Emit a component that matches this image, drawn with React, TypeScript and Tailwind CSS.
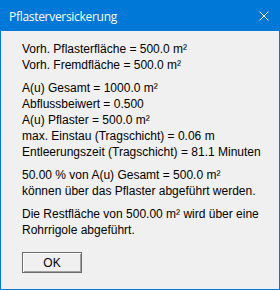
import React from 'react';

const GROUPS: string[][] = [
  ['Vorh. Pflasterfläche = 500.0 m²', 'Vorh. Fremdfläche = 500.0 m²'],
  [
    'A(u) Gesamt = 1000.0 m²',
    'Abflussbeiwert = 0.500',
    'A(u) Pflaster = 500.0 m²',
    'max. Einstau (Tragschicht) = 0.06 m',
    'Entleerungszeit (Tragschicht) = 81.1 Minuten',
  ],
  ['50.00 % von A(u) Gesamt = 500.0 m²', 'können über das Pflaster abgeführt werden.'],
  ['Die Restfläche von 500.00 m² wird über eine', 'Rohrrigole abgeführt.'],
];

export default function App() {
  return (
    <div className="flex h-[290px] w-[280px] flex-col border border-[#0078d7] bg-[#f0f0f0]">
      <div className="flex h-[30px] shrink-0 items-center justify-between bg-[#0078d7] pl-2 pr-[10px]">
        <span className="pt-[1px] text-[12px] tracking-[-0.3px] text-white [font-family:'Open_Sans',sans-serif]">
          Pflasterversickerung
        </span>
        <svg width="10" height="10" viewBox="0 0 10 10" className="mb-[1px]">
          <path d="M0.5 0.5 L9.5 9.5 M9.5 0.5 L0.5 9.5" stroke="white" strokeWidth="1" />
        </svg>
      </div>
      <div className="flex flex-1 flex-col pl-[21px] pt-[10px] text-[12px] text-black [font-family:'Liberation_Sans',Arial,sans-serif]">
        {GROUPS.map((lines, i) => (
          <div key={i} className="mb-[7px] flex flex-col">
            {lines.map((line) => (
              <div key={line} className="h-4 leading-4 whitespace-nowrap">
                {line}
              </div>
            ))}
          </div>
        ))}
        <button
          type="button"
          className="mt-[7px] h-[21px] w-[60px] border border-[#6b6b6b] bg-[#f0f0f0] text-[12px] shadow-[inset_1px_1px_0_#ffffff,inset_-1px_-1px_0_#a0a0a0]"
        >
          OK
        </button>
      </div>
    </div>
  );
}
